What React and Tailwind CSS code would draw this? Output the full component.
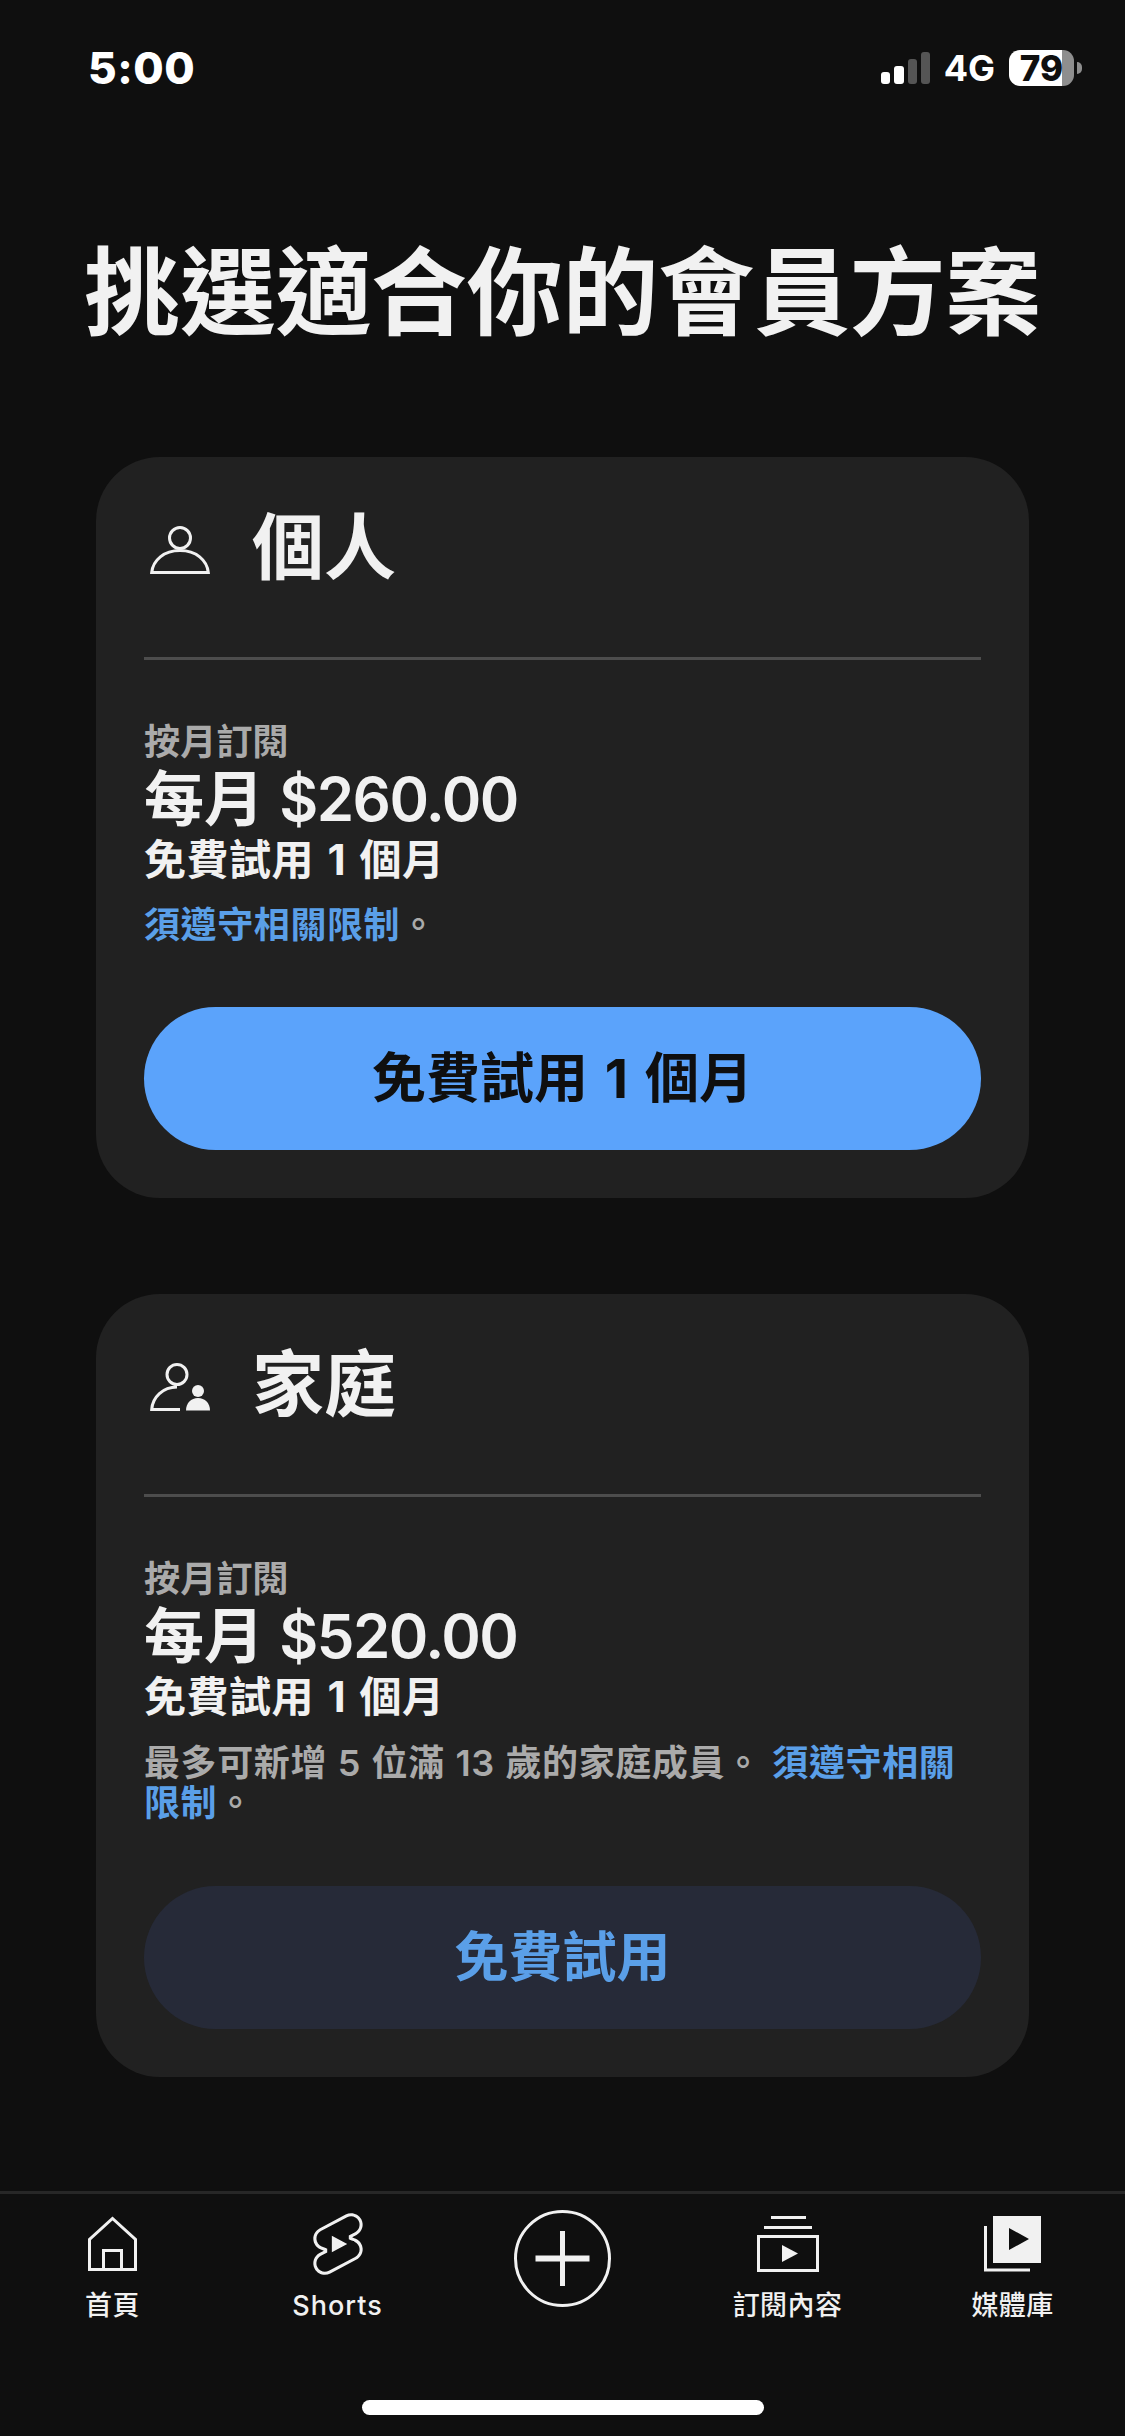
const SHORTS = "M17.77 10.32c-.77-.32-1.2-.5-1.2-.5L18 9.06c1.84-.96 2.53-3.23 1.56-5.06s-3.24-2.53-5.07-1.56L6 6.94c-1.29.68-2.07 2.04-2 3.49.07 1.42.93 2.67 2.22 3.25.03.01 1.2.5 1.2.5L6 14.93c-1.83.97-2.53 3.24-1.56 5.07.97 1.83 3.24 2.53 5.07 1.56l8.5-4.5c1.29-.68 2.06-2.04 1.99-3.49-.07-1.42-.94-2.68-2.23-3.25zm-.23 5.86l-8.5 4.5c-1.34.71-3.01.2-3.72-1.14-.71-1.34-.2-3.01 1.14-3.72l2.04-1.08v-1.21l-.69-.28-1.11-.46c-.99-.41-1.65-1.35-1.7-2.41-.05-1.06.52-2.06 1.46-2.56l8.5-4.5c1.34-.71 3.01-.2 3.72 1.14.71 1.34.2 3.01-1.14 3.72L15.5 9.26v1.21c1.53.61 1.83.76 1.83.76.97.42 1.63 1.36 1.68 2.42.05 1.06-.52 2.06-1.47 2.53zM10 14.65l5-2.65-5-2.65z";

function PersonIcon() {
  return (
    <svg className="mt-[6px]" width="60" height="48" viewBox="0 0 60 48" fill="none" stroke="#f1f1f1" strokeWidth="3">
      <circle cx="30" cy="12" r="10.5" />
      <path d="M1.7 46.5C3 34 14 24.5 30 24.5S57 34 58.3 46.5Z" />
    </svg>
  );
}

function FamilyIcon() {
  return (
    <svg className="mt-[6px]" width="60" height="48" viewBox="0 0 60 48" fill="none" stroke="#f1f1f1" strokeWidth="3">
      <circle cx="27" cy="11.5" r="10" />
      <path d="M30 46.5H1.7C2.5 34 13 24 27 24" />
      <circle cx="48" cy="28" r="6" fill="#f1f1f1" stroke="none" />
      <path d="M36 47.5C36 40 41 35 48 35S60 40 60 47.5Z" fill="#f1f1f1" stroke="none" />
    </svg>
  );
}

function HomeIcon() {
  return (
    <svg width="49" height="56" viewBox="0 0 49 56" fill="none" stroke="#f1f1f1" strokeWidth="3">
      <path d="M1.5 53.5V23.5L24.5 2.5L47.5 23.5V53.5Z" />
      <path d="M15.5 53.5V34.5H33.5V53.5" />
    </svg>
  );
}

function ShortsIcon() {
  return (
    <svg width="74" height="74" viewBox="0 0 24 24" fill="#f1f1f1">
      <path d={SHORTS} />
    </svg>
  );
}

function SubsIcon() {
  return (
    <svg width="62" height="56" viewBox="0 0 62 56" fill="none" stroke="#f1f1f1" strokeWidth="3">
      <path d="M14 1.5H49M7 11.5H55" />
      <rect x="1.5" y="20.5" width="59" height="34" />
      <path d="M25 29L41 37.5L25 46Z" fill="#f1f1f1" stroke="none" />
    </svg>
  );
}

function LibraryIcon() {
  return (
    <svg width="57" height="56" viewBox="0 0 57 56" fill="none">
      <path d="M9 0H57V47H9ZM25 12V34L45 23Z" fill="#f1f1f1" fillRule="evenodd" />
      <path d="M1.5 10V54H46" stroke="#f1f1f1" strokeWidth="3" />
    </svg>
  );
}

function PlusIcon() {
  return (
    <svg width="97" height="97" viewBox="0 0 97 97" fill="none" stroke="#f1f1f1">
      <circle cx="48.5" cy="48.5" r="47" strokeWidth="3" />
      <path d="M21.5 48.5H75.5" strokeWidth="6" />
      <path d="M48.5 21V76" strokeWidth="5" />
    </svg>
  );
}

function PlanCard({ icon, name, amount, note, noteClass, button, buttonClass }) {
  return (
    <section className="w-[933px] rounded-[64px] bg-[#212121] px-[48px] pb-[48px]">
      <header className="flex h-[200px] items-center gap-[42px] pb-[20px] pl-[6px]">
        {icon}
        <h2 className="text-[72px] leading-[90px] font-bold text-[#f1f1f1]">{name}</h2>
      </header>
      <div className="h-[3px] bg-[#4d4d4d]" />
      <p className="mt-[57px] text-[36px] leading-[50px] font-semibold tracking-[0.2px] text-[#aaaaaa]">按月訂閱</p>
      <p className="text-[60px] leading-[64px] font-semibold text-[#f1f1f1]">
        每月 <span className="tracking-[-1.5px]">{amount}</span>
      </p>
      <p className="text-[42px] leading-[58px] font-bold tracking-[0.5px] text-[#f1f1f1] [word-spacing:3px]">免費試用 1 個月</p>
      <p className={`text-[36px] leading-[40px] font-semibold tracking-[0.6px] whitespace-nowrap text-[#aaaaaa] [word-spacing:1px] ${noteClass}`}>{note}</p>
      <button className={`flex h-[143px] w-full items-center justify-center rounded-full text-[54px] font-bold [word-spacing:4px] ${buttonClass}`}>
        {button}
      </button>
    </section>
  );
}

function NavItem({ icon, label, labelClass }) {
  return (
    <div className="flex flex-col items-center">
      <div className="flex h-[74px] items-center justify-center">{icon}</div>
      <span className={`mt-[7px] text-[27px] leading-[36px] font-medium text-[#f1f1f1] ${labelClass}`}>{label}</span>
    </div>
  );
}

export default function App() {
  return (
    <div className="flex h-[2436px] w-[1125px] flex-col overflow-hidden bg-[#0f0f0f] [font-family:Inter,'Noto_Sans_CJK_TC',sans-serif]">
      <div className="flex h-[136px] items-center justify-between pr-[43px] pl-[88px]">
        <span className="text-[44px] leading-none font-extrabold tracking-[0.5px] text-white">5:00</span>
        <div className="flex items-center">
          <div className="flex items-end gap-[4px]">
            <span className="h-[12px] w-[9px] rounded-[3px] bg-white" />
            <span className="h-[18px] w-[10px] rounded-[3px] bg-white" />
            <span className="h-[25px] w-[9px] rounded-[3px] bg-[#555555]" />
            <span className="h-[32px] w-[9px] rounded-[3px] bg-[#555555]" />
          </div>
          <span className="ml-[14px] text-[36px] leading-none font-bold text-white">4G</span>
          <div className="ml-[14px] flex h-[36px] w-[65px] items-center justify-center rounded-[11px] bg-[linear-gradient(90deg,#ffffff_81%,#8e8e8e_81%)] text-[35px] leading-none font-extrabold text-[#0f0f0f]">
            79
          </div>
          <span className="ml-[3px] h-[12px] w-[5px] rounded-r-full bg-[#8e8e8e]" />
        </div>
      </div>

      <h1 className="mt-[96px] text-center text-[96px] leading-[120px] font-bold tracking-[-0.3px] text-[#f1f1f1]">挑選適合你的會員方案</h1>

      <main className="mt-[105px] flex flex-col items-center gap-[96px]">
        <PlanCard
          icon={<PersonIcon />}
          name="個人"
          amount="$260.00"
          note={<><span className="text-[#5a9fe8]">須遵守相關限制</span>。</>}
          noteClass="mt-[16px] mb-[62px]"
          button="免費試用 1 個月"
          buttonClass="bg-[#5ba3fb] text-[#0f0f0f]"
        />
        <PlanCard
          icon={<FamilyIcon />}
          name="家庭"
          amount="$520.00"
          note={<>最多可新增 5 位滿 13 歲的家庭成員。 <span className="text-[#5a9fe8]">須遵守相關<br />限制</span>。</>}
          noteClass="mt-[17px] mb-[63px]"
          button="免費試用"
          buttonClass="bg-[#262a38] text-[#5a9fe8]"
        />
      </main>

      <nav className="mt-[114px] border-t-[3px] border-[#272727] pt-[13px]">
        <div className="grid h-[117px] grid-cols-5">
          <NavItem icon={<HomeIcon />} label="首頁" labelClass="tracking-[0.4px]" />
          <NavItem icon={<ShortsIcon />} label="Shorts" labelClass="tracking-[1px]" />
          <div className="flex justify-center pt-[3px]"><PlusIcon /></div>
          <NavItem icon={<SubsIcon />} label="訂閱內容" labelClass="tracking-[0.4px]" />
          <NavItem icon={<LibraryIcon />} label="媒體庫" labelClass="tracking-[0.4px]" />
        </div>
        <div className="mx-auto mt-[76px] h-[15px] w-[402px] rounded-full bg-white" />
      </nav>
    </div>
  );
}
